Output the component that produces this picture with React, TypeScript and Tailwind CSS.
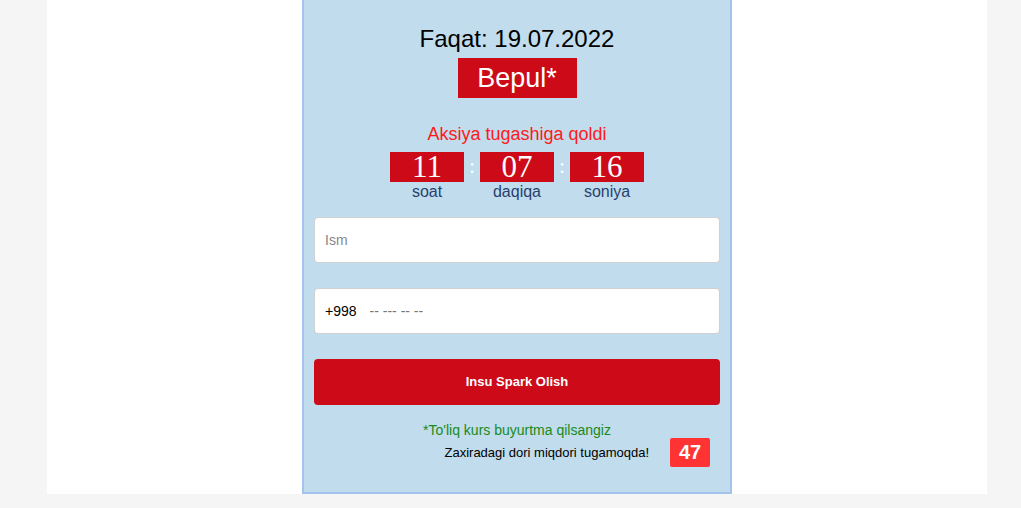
export default function App() {
  const timer = [
    { value: "11", label: "soat" },
    { value: "07", label: "daqiqa" },
    { value: "16", label: "soniya" },
  ];

  return (
    <div className="min-h-[508px] bg-[#f5f5f5] font-['Liberation_Sans',Arial,sans-serif]">
      <div className="ml-[47px] w-[940px] bg-white flex justify-center">
        <div className="w-[430px] h-[494px] bg-[#c0dced] border-2 border-t-0 border-[#a3c3ee] px-[10px] flex flex-col items-center">
          <h2 className="mt-[25px] text-[24px] leading-[28px] text-black">Faqat: 19.07.2022</h2>
          <div className="mt-[5px] w-[119px] h-[40px] bg-[#cd0a17] text-white text-[27px] leading-[40px] text-center">
            Bepul*
          </div>

          <p className="mt-[25px] text-[18px] leading-[22px] text-[#ff1a1a]">Aksiya tugashiga qoldi</p>
          <div className="mt-[7px] flex items-start">
            {timer.map((t, i) => (
              <div key={t.label} className="flex items-start">
                {i > 0 && (
                  <span className="w-[16px] h-[30px] text-center text-white text-[22px] leading-[28px] font-['Liberation_Serif',serif]">:</span>
                )}
                <div className="flex flex-col items-center w-[74px]">
                  <div className="w-[74px] h-[30px] bg-[#cd0a17] text-white text-center text-[31px] leading-[30px] font-['Liberation_Serif',serif]">
                    {t.value}
                  </div>
                  <span className="text-[16px] leading-[19px] text-[#2a3f6e]">{t.label}</span>
                </div>
              </div>
            ))}
          </div>

          <input
            placeholder="Ism"
            className="mt-[16px] w-[406px] h-[46px] bg-white border border-[#d0d0d0] rounded-[4px] px-[10px] text-[14px] text-black placeholder:text-[#888] outline-none"
          />
          <div className="mt-[25px] w-[406px] h-[46px] bg-white border border-[#d0d0d0] rounded-[4px] px-[10px] flex items-center text-[14px]">
            <span className="text-black">+998</span>
            <input
              placeholder="-- --- -- --"
              className="ml-[13px] flex-1 bg-transparent text-[14px] placeholder:text-[#777] outline-none"
            />
          </div>

          <button className="mt-[25px] w-[406px] h-[46px] bg-[#cd0a17] rounded-[4px] text-white text-[13px] font-bold">
            Insu Spark Olish
          </button>

          <p className="mt-[17px] text-[14px] leading-[17px] text-[#1a8a1a]">*To'liq kurs buyurtma qilsangiz</p>
          <div className="-mt-[1px] w-[406px] flex items-center justify-end pr-[10px]">
            <span className="text-[13px] text-black">Zaxiradagi dori miqdori tugamoqda!</span>
            <span className="ml-[21px] w-[40px] h-[29px] bg-[#ff3333] rounded-[2px] text-white text-[20px] font-bold leading-[29px] text-center">
              47
            </span>
          </div>
        </div>
      </div>
    </div>
  );
}
